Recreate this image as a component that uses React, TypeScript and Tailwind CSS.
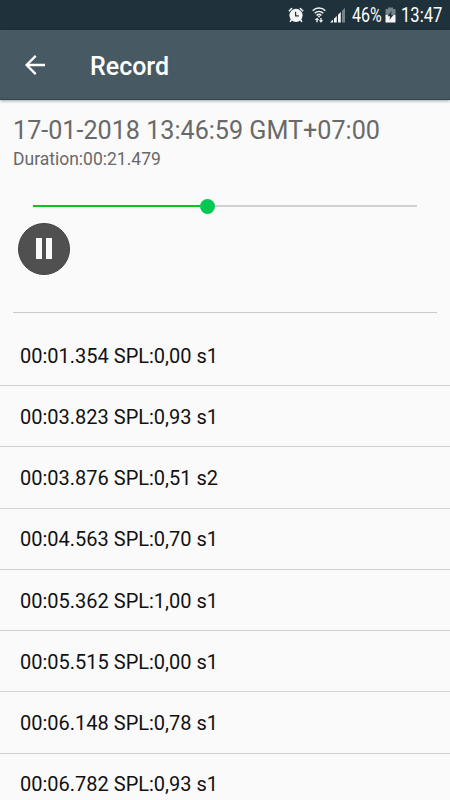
const rows = [
  '00:01.354 SPL:0,00 s1',
  '00:03.823 SPL:0,93 s1',
  '00:03.876 SPL:0,51 s2',
  '00:04.563 SPL:0,70 s1',
  '00:05.362 SPL:1,00 s1',
  '00:05.515 SPL:0,00 s1',
  '00:06.148 SPL:0,78 s1',
  '00:06.782 SPL:0,93 s1',
];

function AlarmIcon() {
  return (
    <svg className="h-4 w-4 shrink-0" viewBox="0 0 16 16" fill="none">
      <path d="M1.3 3.8 3.6 1.5M14.7 3.8 12.4 1.5" stroke="#f4f6f7" strokeWidth="1.6" strokeLinecap="round" />
      <path d="M3.6 12.5 2.4 14.4M12.4 12.5l1.2 1.9" stroke="#f4f6f7" strokeWidth="1.6" strokeLinecap="round" />
      <circle cx="8" cy="8.3" r="6.6" fill="#f4f6f7" />
      <path d="M7.6 4.8v4h3.2" stroke="#1f323b" strokeWidth="1.2" />
    </svg>
  );
}

function WifiIcon() {
  return (
    <svg className="ml-2 h-4 w-[14px] shrink-0" viewBox="0 0 14 16" fill="none">
      <g stroke="#f0f3f4" strokeWidth="1.5">
        <path d="M0.7 3.8C4.2.2 9.8.2 13.3 3.8" />
        <path d="M2.7 6.3c2.5-2.5 6.1-2.5 8.6 0" />
        <path d="M4.6 8.5c1.4-1.3 3.4-1.3 4.8 0" />
      </g>
      <path d="m7 10.8-1.4-1.3q1.4-1 2.8 0Z" fill="#f0f3f4" />
      <path d="M5 10.7 2.8 13h1.5v2.3h1.4V13h1.5ZM9 15.7l2.2-2.4H9.7V11H8.3v2.3H6.8Z" fill="#f0f3f4" />
    </svg>
  );
}

function SignalIcon() {
  return (
    <svg className="ml-1 h-4 w-4 shrink-0" viewBox="0 0 16 16">
      <path d="M0 15.4 3 12.4v3Z" fill="#f4f6f7" />
      <path d="M4 11.7 6.8 8.9v6.5H4Z" fill="#f4f6f7" />
      <path d="M8 7.8 10.8 5v10.4H8Z" fill="#f4f6f7" />
      <path d="M12 3.8 15 .8v14.6h-3Z" fill="#75838a" />
    </svg>
  );
}

function BatteryIcon() {
  return (
    <svg className="ml-[2px] h-4 w-[11px] shrink-0" viewBox="0 0 11 16">
      <path d="M3 .5h5V2h2.5v6H.5V2H3Z" fill="#75838a" />
      <path d="M.5 8h10v7.5H.5Z" fill="#f4f6f7" />
      <path d="M6.7 3.7 2.6 9.2h2.5L4.4 13 8.4 7.9H6Z" fill="#1f323b" />
    </svg>
  );
}

export default function App() {
  return (
    <div className="flex h-[800px] w-[450px] flex-col overflow-hidden bg-[#fafafa] font-['Roboto',sans-serif]">
      <div className="flex h-[30px] shrink-0 items-center bg-[#1f323b] pl-[288px] text-white">
        <AlarmIcon />
        <WifiIcon />
        <SignalIcon />
        <span className="ml-[6px] w-[31px] origin-left scale-x-[0.82] whitespace-nowrap pt-px text-[19.5px] leading-[30px]">46%</span>
        <BatteryIcon />
        <span className="ml-[5px] origin-left scale-x-[0.85] whitespace-nowrap pt-px text-[19.5px] leading-[30px]">13:47</span>
      </div>
      <header className="z-10 flex h-[70px] shrink-0 items-center border-b border-[#294853] bg-[#475a64] pl-[25px] text-white shadow-[0_1px_3px_rgba(0,0,0,0.35)]">
        <svg className="h-5 w-5" viewBox="0 0 20 20" fill="none" stroke="#fff" strokeWidth="2.3">
          <path d="M20 10H2M10.7.9 1.6 10l9.1 9.1" />
        </svg>
        <h1 className="ml-[45px] pt-[4px] text-[25px] font-medium leading-[30px]">Record</h1>
      </header>
      <section className="h-[212px] shrink-0 px-[13px] pt-4 text-[#696969]">
        <p className="whitespace-nowrap text-[25.15px] leading-[30px]">17-01-2018 13:46:59 GMT+07:00</p>
        <p className="mt-[2px] text-[17.5px] leading-[22px]">Duration:00:21.479</p>
        <div className="ml-5 mt-[28px] flex h-4 w-[384px] items-center">
          <div className="h-[2px] w-[167px] bg-[#00c81e]" />
          <div className="h-[15px] w-[15px] rounded-full bg-[#00c853]" />
          <div className="h-[2px] flex-1 bg-[#d0d0d0]" />
        </div>
        <div className="ml-[5px] mt-[8.5px] flex h-[52px] w-[52px] items-center justify-center gap-1 rounded-full border border-[#424242] bg-[#505050]">
          <div className="h-[21px] w-[6px] bg-[#fafafa]" />
          <div className="h-[21px] w-[6px] bg-[#fafafa]" />
        </div>
      </section>
      <div className="mx-[13px] h-px shrink-0 bg-[#cbcbcb]" />
      <ul className="pt-[11.75px]">
        {rows.map((row) => (
          <li key={row} className="flex h-[61.25px] items-center border-b border-[#d2d2d2] pl-5 pt-[1.5px] text-[20px] leading-[24px] text-[#111]">
            {row}
          </li>
        ))}
      </ul>
    </div>
  );
}
